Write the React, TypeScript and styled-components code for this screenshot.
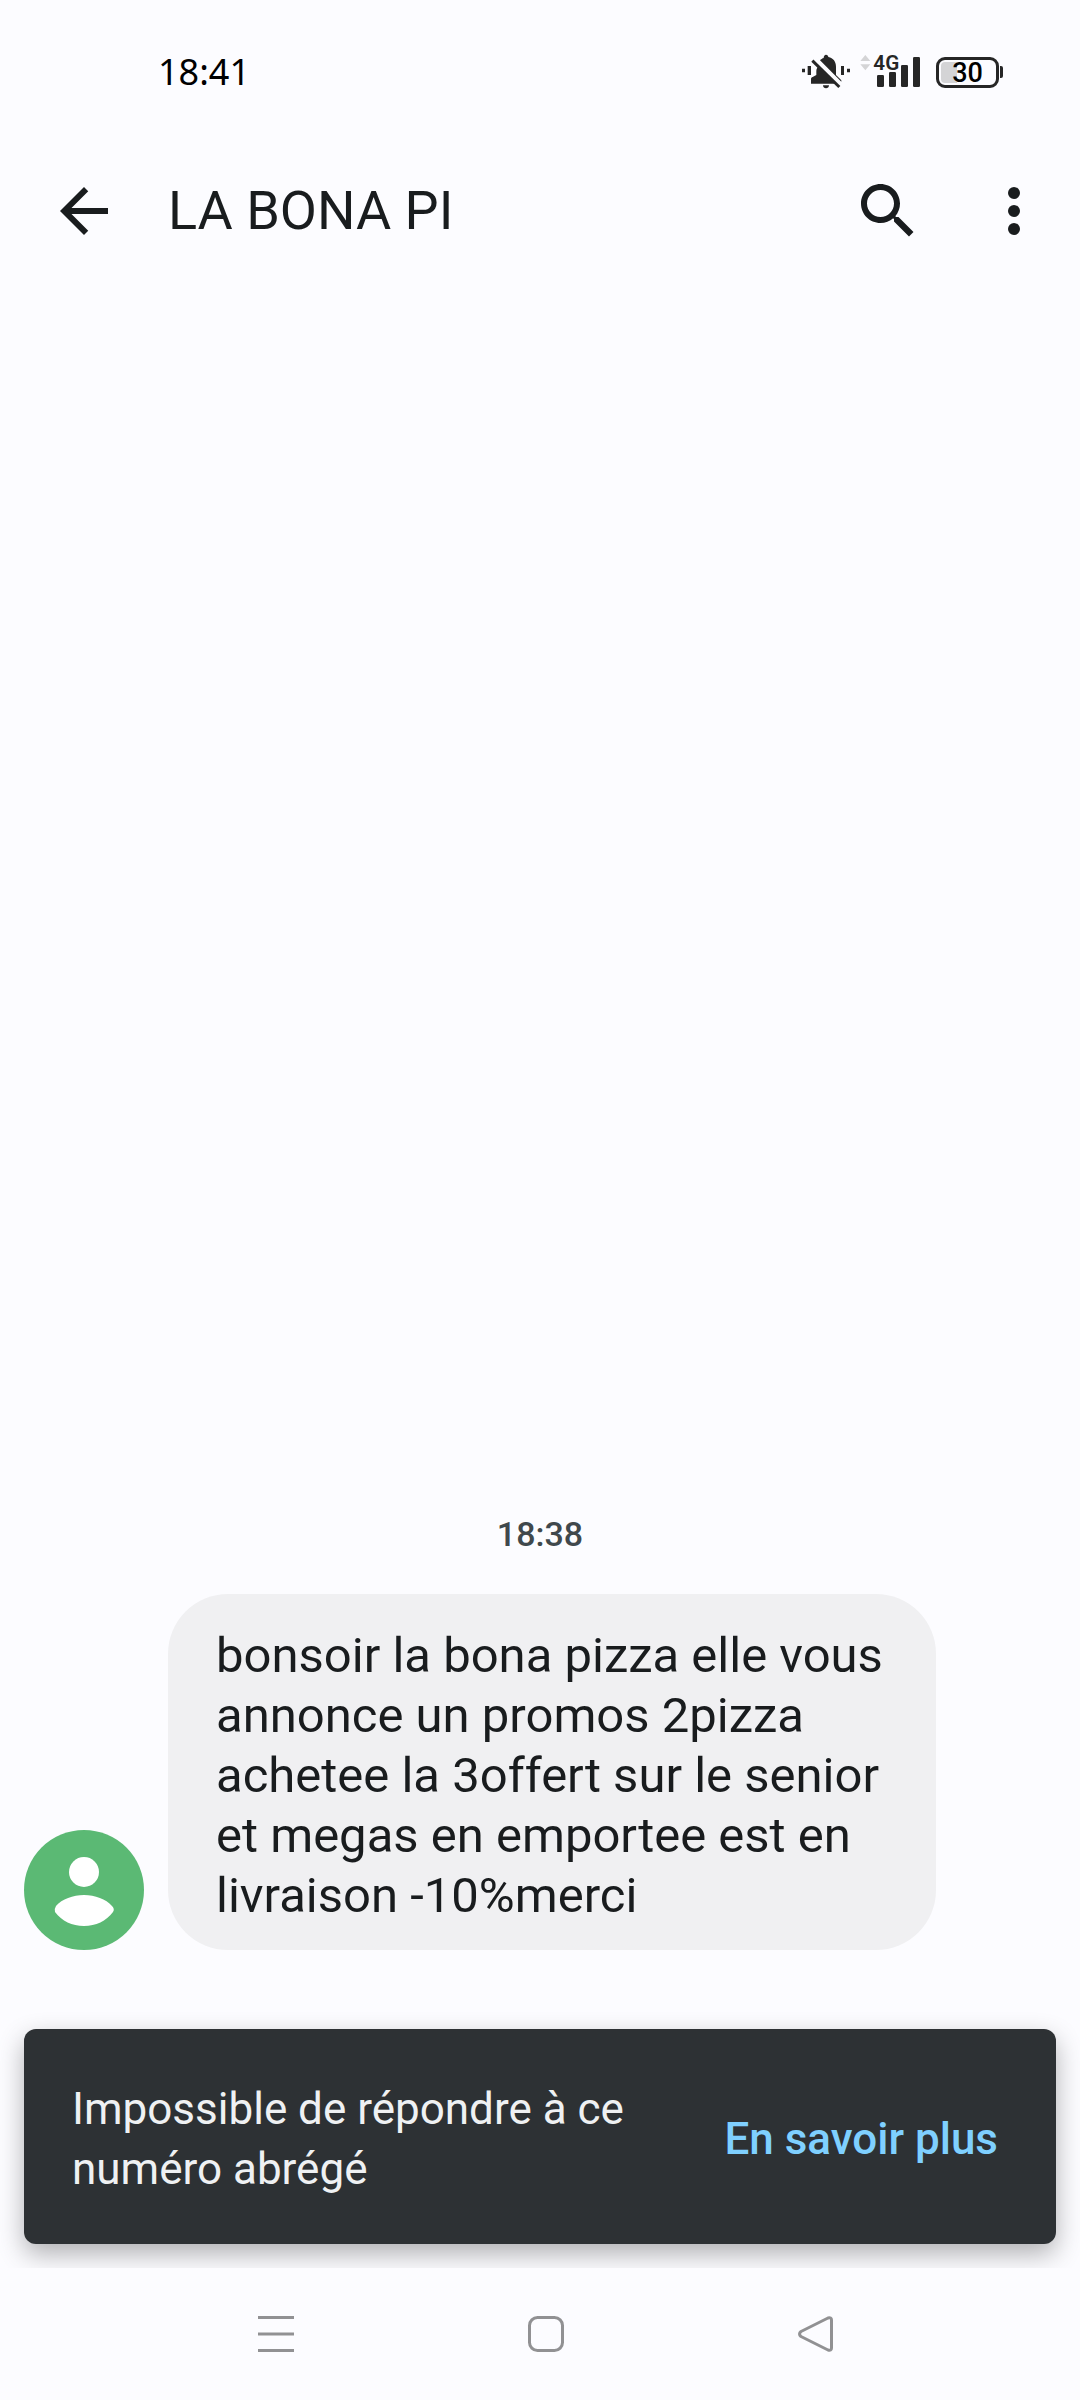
import React from "react";
import styled, { createGlobalStyle } from "styled-components";

const GlobalStyle = createGlobalStyle`
  *, *::before, *::after { box-sizing: border-box; }
  body {
    margin: 0;
    background: #fcfcff;
    color: #191c1e;
    font-family: Roboto, "Noto Sans", sans-serif;
  }
`;

const Screen = styled.div`
  display: flex;
  flex-direction: column;
  min-height: 100vh;
`;

const StatusBar = styled.div`
  display: flex;
  align-items: center;
  justify-content: space-between;
  height: 144px;
  padding: 0 77px 0 158px;
`;

const Clock = styled.time`
  font: 400 36px/48px "Noto Sans", sans-serif;
  color: #000;
`;

const StatusIcons = styled.div`
  display: flex;
  align-items: center;
`;

const StatusSvg = styled.svg<{ $gap: number }>`
  display: block;
  height: 44px;
  margin-right: ${({ $gap }) => $gap}px;
`;

const Battery = styled.div`
  display: flex;
  align-items: center;
  gap: 1px;
  &::after {
    content: "";
    width: 3px;
    height: 12px;
    border-radius: 0 2px 2px 0;
    background: #262626;
  }
`;

const BatteryBody = styled.div<{ $level: number }>`
  width: 63px;
  height: 31px;
  padding: 2px;
  border: 3px solid #262626;
  border-radius: 9px;
  span {
    display: block;
    height: 21px;
    border-radius: 4px;
    background: linear-gradient(
      to right,
      #d4d4d6 ${({ $level }) => $level}%,
      transparent ${({ $level }) => $level}%
    );
    color: #000;
    font: 500 27px/22px Roboto, sans-serif;
    text-align: center;
  }
`;

const AppBar = styled.header`
  display: flex;
  align-items: center;
  gap: 48px;
  height: 134px;
  padding: 0 30px 0 48px;
`;

const Title = styled.h1`
  flex: 1;
  margin: 0;
  font-size: 54px;
  font-weight: 400;
  line-height: 72px;
`;

const Actions = styled.div`
  display: flex;
  gap: 54px;
`;

const IconButton = styled.button`
  display: block;
  padding: 0;
  border: 0;
  background: none;
  color: inherit;
  cursor: pointer;
  svg {
    display: block;
    width: 72px;
    height: 72px;
    fill: currentColor;
  }
`;

const Conversation = styled.main`
  flex: 1;
  display: flex;
  flex-direction: column;
  justify-content: flex-end;
  overflow: hidden;
`;

const DateLabel = styled.time`
  margin-bottom: 36px;
  color: #40484c;
  font-size: 34px;
  font-weight: 500;
  line-height: 48px;
  text-align: center;
`;

const MessageRow = styled.div`
  display: flex;
  align-items: flex-end;
  gap: 24px;
  padding: 0 144px 0 24px;
  margin-bottom: 79px;
`;

const Avatar = styled.svg`
  flex: none;
  width: 120px;
  height: 120px;
`;

const Bubble = styled.p`
  margin: 0;
  padding: 32px 48px 24px;
  border-radius: 60px;
  background: #f0f0f2;
  font-size: 49px;
  line-height: 60px;
`;

const Snackbar = styled.div`
  display: flex;
  align-items: center;
  gap: 48px;
  margin: 0 24px 24px;
  padding: 50px 58px 45px 48px;
  border-radius: 12px;
  background: #2d3134;
  box-shadow: 0 10px 26px rgba(0, 0, 0, 0.3);
`;

const SnackbarText = styled.p`
  flex: 1;
  margin: 0;
  color: #eff1f3;
  font-size: 44px;
  line-height: 60px;
`;

const SnackbarAction = styled.button`
  padding: 0;
  border: 0;
  background: none;
  color: #7fd0ff;
  font: 500 44px/60px Roboto, "Noto Sans", sans-serif;
  cursor: pointer;
`;

const NavBar = styled.nav`
  display: grid;
  grid-template-columns: repeat(3, 1fr);
  height: 132px;
  padding: 0 129px 0 141px;
`;

const NavButton = styled.button`
  display: flex;
  align-items: center;
  justify-content: center;
  padding: 0;
  border: 0;
  background: none;
  cursor: pointer;
  svg {
    width: 36px;
    height: 36px;
    fill: none;
    stroke: #919193;
    stroke-width: 3;
    stroke-linejoin: round;
  }
`;

function SilentIcon() {
  return (
    <StatusSvg $gap={8} width="52" viewBox="60 30 156 132" fill="#262626" aria-label="Sonnerie coupée">
      <path d="M66 86h9v11h-9zM83 78h10v27H83zM183 78h9v27h-9zM201 86h9v11h-9z" />
      <path d="M138 44c4 0 7 3 7 7 15 3 23 14 23 29v25l16 16v4l-64-64c3-3 7-6 11-7 0-6 3-10 7-10z" />
      <path d="M117 78l53 53H93v-14c0-3 2-5 5-6l11-6V92c0-5 3-10 8-14z" />
      <path d="M129 136h18c0 6-4 9-9 9s-9-3-9-9z" />
      <path d="M106 57l80 79" stroke="#fcfcff" strokeWidth="7" />
      <path d="M97 62l81 79" stroke="#262626" strokeWidth="9" />
    </StatusSvg>
  );
}

function SignalIcon() {
  return (
    <StatusSvg $gap={15} width="61" viewBox="240 30 183 132" fill="#262626" aria-label="Réseau 4G">
      <path d="M256 45l15 18h-30zM256 91l15-18h-30z" fill="#d4d4d6" />
      <rect x="291" y="105" width="21" height="36" rx="4" />
      <rect x="327" y="96" width="21" height="45" rx="4" />
      <rect x="363" y="75" width="21" height="66" rx="4" />
      <rect x="399" y="51" width="21" height="90" rx="4" />
      <text x="280" y="91" fontFamily="Roboto, sans-serif" fontSize="62" fontWeight="600">4G</text>
    </StatusSvg>
  );
}

export default function App() {
  return (
    <>
      <GlobalStyle />
      <Screen>
        <StatusBar>
          <Clock>18:41</Clock>
          <StatusIcons>
            <SilentIcon />
            <SignalIcon />
            <Battery>
              <BatteryBody $level={30}>
                <span>30</span>
              </BatteryBody>
            </Battery>
          </StatusIcons>
        </StatusBar>

        <AppBar>
          <IconButton type="button" aria-label="Retour">
            <svg viewBox="0 0 24 24">
              <path d="M20 11H7.83l5.59-5.59L12 4l-8 8 8 8 1.41-1.41L7.83 13H20v-2z" />
            </svg>
          </IconButton>
          <Title>LA BONA PI</Title>
          <Actions>
            <IconButton type="button" aria-label="Rechercher">
              <svg viewBox="0 0 24 24">
                <path d="M15.5 14h-.79l-.28-.27C15.41 12.59 16 11.11 16 9.5 16 5.91 13.09 3 9.5 3S3 5.91 3 9.5 5.91 16 9.5 16c1.61 0 3.09-.59 4.23-1.57l.27.28v.79l5 4.99L20.49 19l-4.99-5zm-6 0C7.01 14 5 11.99 5 9.5S7.01 5 9.5 5 14 7.01 14 9.5 11.99 14 9.5 14z" />
              </svg>
            </IconButton>
            <IconButton type="button" aria-label="Plus d'options">
              <svg viewBox="0 0 24 24">
                <circle cx="12" cy="6" r="2" />
                <circle cx="12" cy="12" r="2" />
                <circle cx="12" cy="18" r="2" />
              </svg>
            </IconButton>
          </Actions>
        </AppBar>

        <Conversation>
          <DateLabel>18:38</DateLabel>
          <MessageRow>
            <Avatar viewBox="0 0 120 120" aria-hidden="true">
              <circle cx="60" cy="60" r="60" fill="#5bb974" />
              <circle cx="60" cy="42" r="15" fill="#fff" />
              <path
                d="M32 76C38 69 49 65 60 65s22 4 28 11q3 3 1 6C82 91 72 96 60 96S38 91 31 82q-1-3 1-6z"
                fill="#fff"
              />
            </Avatar>
            <Bubble>
              bonsoir la bona pizza elle vous annonce un promos 2pizza achetee la 3offert sur le
              senior et megas en emportee est en livraison -10%merci
            </Bubble>
          </MessageRow>
          <Snackbar role="status">
            <SnackbarText>Impossible de répondre à ce numéro abrégé</SnackbarText>
            <SnackbarAction type="button">En savoir plus</SnackbarAction>
          </Snackbar>
        </Conversation>

        <NavBar>
          <NavButton type="button" aria-label="Applications récentes">
            <svg viewBox="0 0 36 36">
              <path d="M0 1.5h36M0 18h36M0 34.5h36" />
            </svg>
          </NavButton>
          <NavButton type="button" aria-label="Accueil">
            <svg viewBox="0 0 36 36">
              <rect x="1.5" y="1.5" width="33" height="33" rx="8" />
            </svg>
          </NavButton>
          <NavButton type="button" aria-label="Précédent">
            <svg viewBox="0 0 36 36">
              <path d="M30 2L3 15.5q-3 2.500 0 5L30 34q3.500 1 3.500-2V4q0-3-3.500-2z" />
            </svg>
          </NavButton>
        </NavBar>
      </Screen>
    </>
  );
}
